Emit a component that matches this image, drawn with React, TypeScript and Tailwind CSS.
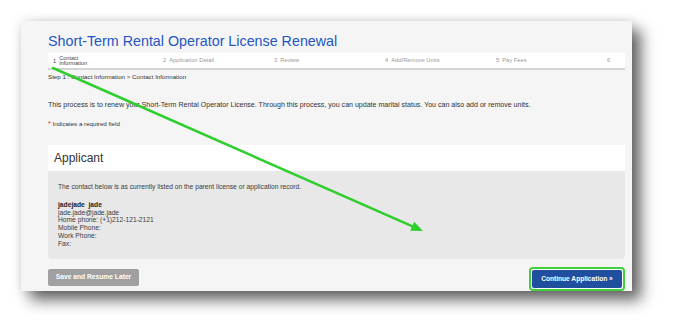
import React from "react";

const steps = [
  { n: "2", label: "Application Detail" },
  { n: "3", label: "Review" },
  { n: "4", label: "Add/Remove Units" },
  { n: "5", label: "Pay Fees" },
  { n: "6", label: "" },
];

export default function App() {
  return (
    <div className="relative w-[674px] h-[333px] bg-white overflow-hidden font-['Liberation_Sans',Arial,sans-serif]">
      <div className="pt-[21px] pl-[21px]">
        <div className="w-[611px] h-[270px] bg-[#f5f5f5] shadow-[9px_9px_14px_rgba(0,0,0,0.6),0_0_10px_rgba(0,0,0,0.12)] pl-[27px] pr-[7px] pt-[10px] flex flex-col">
          <h1 className="text-[14.3px] leading-[20px] text-[#2456c6] whitespace-nowrap">
            Short-Term Rental Operator License Renewal
          </h1>
          <div className="mt-[2px] h-[18px] bg-white border-b-2 border-[#d4d4d4] flex overflow-hidden">
            <div className="w-[111px] shrink-0 h-[18px] border-b-2 border-[#2456c6] flex items-center pl-[5px] gap-[3px] text-[5.6px] text-[#444]">
              <span>1</span>
              <span className="leading-[5.5px]">
                Contact
                <br />
                Information
              </span>
            </div>
            {steps.map((s) => (
              <div
                key={s.n}
                className="w-[111px] shrink-0 flex items-center pl-[4px] gap-[3px] text-[5.8px] text-[#9a9a9a] whitespace-nowrap"
              >
                <span>{s.n}</span>
                <span>{s.label}</span>
              </div>
            ))}
          </div>
          <div className="mt-[3px] text-[6.2px] leading-[8px] text-[#333]">
            Step 1 : Contact Information &gt; Contact Information
          </div>
          <p className="mt-[20px] text-[7.05px] leading-[8px] text-[#333] whitespace-nowrap">
            This process is to renew your Short-Term Rental Operator License. Through this process, you can update
            marital status. You can also add or remove units.
          </p>
          <div className="mt-[11px] text-[6.2px] leading-[8px] text-[#333]">
            <span className="text-[#e02020] text-[7px]">*</span> Indicates a required field
          </div>
          <div className="mt-[17px]">
            <div className="h-[26px] bg-white flex items-center pl-[6px] text-[12px] text-[#333]">Applicant</div>
            <div className="h-[88px] bg-[#e8e8e8] rounded-b-[4px] pl-[10px] pt-[12px] text-[#3a3a3a]">
              <div className="text-[6.7px] leading-[8px]">
                The contact below is as currently listed on the parent license or application record.
              </div>
              <div className="mt-[10px] text-[6.7px] leading-[7.7px]">
                <div className="font-bold text-[#222]">jadejade&nbsp; jade</div>
                <div>jade.jade@jade.jade</div>
                <div>Home phone: (+1)212-121-2121</div>
                <div>Mobile Phone:</div>
                <div>Work Phone:</div>
                <div>Fax:</div>
              </div>
            </div>
          </div>
          <div className="mt-[8px] flex justify-between items-start">
            <button className="mt-[2px] w-[91px] h-[17px] bg-[#a0a0a0] rounded-[2px] text-white font-bold text-[6.7px] flex items-center justify-center">
              Save and Resume Later
            </button>
            <div className="w-[96px] h-[24px] border-2 border-[#3fcf3f] rounded-[4px] p-[1px] bg-white">
              <button className="w-full h-full bg-[#1f4f9e] rounded-[2px] text-white font-bold text-[6.6px] flex items-center justify-center">
                Continue Application »
              </button>
            </div>
          </div>
        </div>
      </div>
      <svg className="absolute left-0 top-0 pointer-events-none" width="674" height="333">
        <line x1="53" y1="68" x2="412" y2="226.2" stroke="#2fce2f" strokeWidth="2.5" strokeLinecap="round" />
        <polygon points="423,231 410.2,230.8 414.2,221.8" fill="#2fce2f" />
      </svg>
    </div>
  );
}
